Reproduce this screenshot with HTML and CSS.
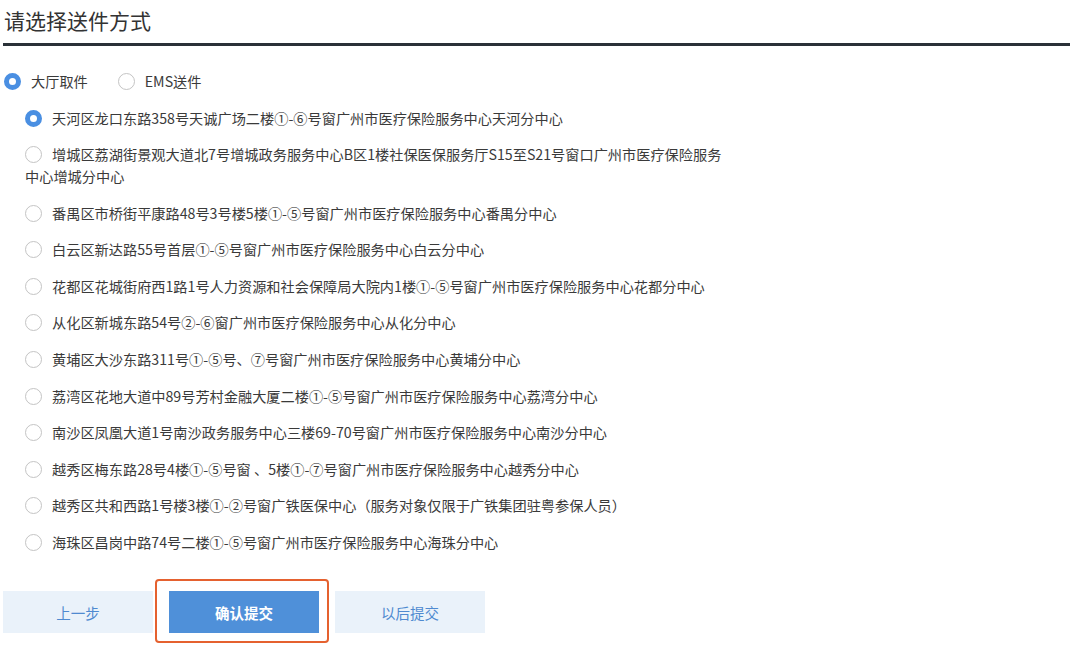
FILE: index.html
```html
<!DOCTYPE html>
<html lang="zh-CN">
<head>
<meta charset="utf-8">
<title>请选择送件方式</title>
<link rel="stylesheet" href="styles.css">
</head>
<body>
<div class="page">
  <h1 class="title">请选择送件方式</h1>
  <div class="divider"></div>
  <div class="mode-row">
    <label class="opt"><span class="radio checked"></span>大厅取件</label>
    <label class="opt"><span class="radio"></span>EMS送件</label>
  </div>
  <div class="addr-list">
    <div class="addr"><span class="radio checked"></span>天河区龙口东路358号天诚广场二楼①-⑥号窗广州市医疗保险服务中心天河分中心</div>
    <div class="addr"><span class="radio"></span>增城区荔湖街景观大道北7号增城政务服务中心B区1楼社保医保服务厅S15至S21号窗口广州市医疗保险服务中心增城分中心</div>
    <div class="addr"><span class="radio"></span>番禺区市桥街平康路48号3号楼5楼①-⑤号窗广州市医疗保险服务中心番禺分中心</div>
    <div class="addr"><span class="radio"></span>白云区新达路55号首层①-⑤号窗广州市医疗保险服务中心白云分中心</div>
    <div class="addr"><span class="radio"></span>花都区花城街府西1路1号人力资源和社会保障局大院内1楼①-⑤号窗广州市医疗保险服务中心花都分中心</div>
    <div class="addr"><span class="radio"></span>从化区新城东路54号②-⑥窗广州市医疗保险服务中心从化分中心</div>
    <div class="addr"><span class="radio"></span>黄埔区大沙东路311号①-⑤号、⑦号窗广州市医疗保险服务中心黄埔分中心</div>
    <div class="addr"><span class="radio"></span>荔湾区花地大道中89号芳村金融大厦二楼①-⑤号窗广州市医疗保险服务中心荔湾分中心</div>
    <div class="addr"><span class="radio"></span>南沙区凤凰大道1号南沙政务服务中心三楼69-70号窗广州市医疗保险服务中心南沙分中心</div>
    <div class="addr"><span class="radio"></span>越秀区梅东路28号4楼①-⑤号窗 、5楼①-⑦号窗广州市医疗保险服务中心越秀分中心</div>
    <div class="addr"><span class="radio"></span>越秀区共和西路1号楼3楼①-②号窗广铁医保中心（服务对象仅限于广铁集团驻粤参保人员）</div>
    <div class="addr"><span class="radio"></span>海珠区昌岗中路74号二楼①-⑤号窗广州市医疗保险服务中心海珠分中心</div>
  </div>
  <div class="actions">
    <button class="btn btn-light">上一步</button>
    <div class="highlight"><button class="btn btn-primary">确认提交</button></div>
    <button class="btn btn-light">以后提交</button>
  </div>
</div>
</body>
</html>
```

FILE: styles.css
```css
* { box-sizing: border-box; }
html, body {
  margin: 0;
  padding: 0;
  background: #ffffff;
}
body {
  font-family: "Noto Sans CJK SC", "Noto Sans", "Liberation Sans", sans-serif;
  color: #3a3a3a;
}
.page {
  width: 1080px;
  height: 649px;
  overflow: hidden;
}
.title {
  margin: 0;
  padding: 5px 0 0 4px;
  font-size: 21px;
  line-height: 30px;
  font-weight: 400;
  color: #333;
}
.divider {
  margin: 8px 0 0 3px;
  width: 1067px;
  height: 3px;
  background: #2a3138;
}
.mode-row {
  margin-top: 24px;
  padding-left: 4px;
  display: flex;
  gap: 30px;
  font-size: 14.2px;
  line-height: 22px;
}
.opt {
  display: flex;
  align-items: center;
}
.radio {
  display: inline-block;
  width: 17px;
  height: 17px;
  border-radius: 50%;
  border: 1px solid #c4c4c4;
  background: #fff;
  margin-right: 10px;
  flex: none;
}
.radio.checked {
  border: 5px solid #4a8fe2;
}
.addr-list {
  margin-top: 14.5px;
  padding-left: 25px;
  display: flex;
  flex-direction: column;
  gap: 14.6px;
  font-size: 14.2px;
  line-height: 22px;
}
.addr {
  width: 705px;
}
.addr .radio {
  vertical-align: -3px;
}
.actions {
  margin-top: 38px;
  padding-left: 3px;
  display: flex;
  align-items: flex-start;
}
.btn {
  width: 150px;
  height: 42px;
  border: none;
  border-radius: 0;
  font-family: inherit;
  font-size: 14.5px;
  cursor: pointer;
}
.btn-light {
  background: #eaf2fa;
  color: #4f8ad0;
}
.btn-primary {
  background: #4f90d9;
  color: #fff;
  font-weight: 700;
}
.highlight {
  margin: -12px 6px 0 2px;
  padding: 10px 8px 8px 12px;
  border: 2px solid #e5612f;
  border-radius: 4px;
}
.highlight .btn {
  display: block;
}
```
